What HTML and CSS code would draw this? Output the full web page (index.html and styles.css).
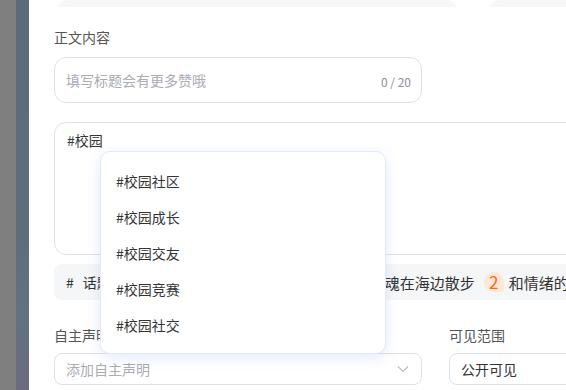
FILE: index.html
```html
<!DOCTYPE html>
<html lang="zh-CN">

<head>
    <meta charset="UTF-8">
    <meta name="viewport" content="width=device-width, initial-scale=1.0">
    <title>发布笔记</title>
    <link rel="stylesheet" href="styles.css">
</head>

<body>
    <div class="backdrop">
        <div class="strip-grey"></div>
        <div class="strip-slate"></div>
    </div>

    <main class="panel">
        <div class="top-row">
            <div class="top-box"></div>
            <div class="top-box"></div>
        </div>

        <h4 class="label">正文内容</h4>
        <div class="title-input">
            <span class="placeholder">填写标题会有更多赞哦</span>
            <span class="counter">0 / 20</span>
        </div>

        <div class="editor">
            <p class="editor-text">#校园</p>
            <ul class="suggest">
                <li>#校园社区</li>
                <li>#校园成长</li>
                <li>#校园交友</li>
                <li>#校园竞赛</li>
                <li>#校园社交</li>
            </ul>
        </div>

        <div class="topic-bar">
            <span class="topic-title"><b>#</b>话题</span>
            <span class="badge">1</span>
            <span class="topic-item">周末午后带上耳机独自一个人和灵魂在海边散步</span>
            <span class="badge badge-two">2</span>
            <span class="topic-item">和情绪的告别仪式</span>
        </div>

        <div class="form-row">
            <div class="field">
                <h4 class="label">自主声明</h4>
                <div class="select">
                    <span class="placeholder">添加自主声明</span>
                    <svg class="chevron" width="12" height="8" viewBox="0 0 12 8">
                        <path d="M1 1.5 L6 6.5 L11 1.5" fill="none" stroke="#b8bcc4" stroke-width="1.2" />
                    </svg>
                </div>
            </div>
            <div class="field">
                <h4 class="label">可见范围</h4>
                <div class="select">
                    <span class="value">公开可见</span>
                </div>
            </div>
        </div>
    </main>
</body>

</html>
```

FILE: styles.css
```css
* {
    box-sizing: border-box;
    margin: 0;
    padding: 0;
    list-style-type: none;
}

body {
    width: 566px;
    height: 390px;
    overflow: hidden;
    display: flex;
    font-family: "Noto Sans CJK SC", "Noto Sans", sans-serif;
    color: #333;
    background: #fff;
}

.backdrop {
    display: flex;
    flex: none;
}

.strip-grey {
    width: 16px;
    background: #7f7f7f;
}

.strip-slate {
    width: 13px;
    background: linear-gradient(180deg, #5d6a7a 0%, #5f6d7b 60%, #617280 80%, #6b6b80 100%);
}

.panel {
    flex: none;
    width: 820px;
    padding-left: 25px;
    background: #fff;
}

/* previous row, mostly scrolled away */
.top-row {
    height: 7px;
    overflow: hidden;
    display: grid;
    grid-template-columns: 402px 400px;
    gap: 30px;
    align-items: end;
    padding-left: 2px;
}

.top-box {
    height: 40px;
    border-radius: 12px;
    background: #f7f7f8;
}

.label {
    font-size: 14px;
    font-weight: normal;
    line-height: 20px;
    color: #555;
}

.top-row + .label {
    margin-top: 20px;
}

.title-input {
    width: 368px;
    height: 46px;
    margin-top: 10px;
    border: 1px solid #dfe1e8;
    border-radius: 12px;
    display: flex;
    align-items: center;
    justify-content: space-between;
    padding: 0 10px 0 11px;
}

.placeholder {
    font-size: 14px;
    color: #a9acb4;
}

.counter {
    font-size: 12px;
    color: #8d9099;
    padding-top: 3px;
}

.editor {
    position: relative;
    width: 763px;
    height: 133px;
    margin-top: 19px;
    border: 1px solid #dfe1e8;
    border-radius: 12px;
    padding: 7px 12px;
}

.editor-text {
    font-size: 14px;
    line-height: 20px;
}

.suggest {
    position: absolute;
    left: 45px;
    top: 28px;
    width: 286px;
    height: 203px;
    padding: 11px 0 10px;
    background: #fff;
    border: 1px solid #e2e9fb;
    border-radius: 10px;
    box-shadow: 0 4px 14px rgba(70, 110, 230, 0.14);
    z-index: 2;
}

.suggest li {
    height: 36px;
    line-height: 36px;
    padding-left: 15px;
    font-size: 14px;
    color: #333;
}

.topic-bar {
    width: 763px;
    height: 36px;
    margin-top: 9px;
    background: #f5f6f7;
    border-radius: 8px;
    display: flex;
    align-items: center;
    padding-left: 12px;
    white-space: nowrap;
    font-size: 15px;
}

.topic-title {
    font-size: 14px;
    color: #333;
}

.topic-title b {
    font-weight: normal;
    margin-right: 9px;
}

.badge {
    width: 20px;
    height: 20px;
    flex: none;
    border-radius: 10px 10px 3px 10px;
    background: #fde7d6;
    color: #ff6a10;
    font-size: 17px;
    line-height: 20px;
    text-align: center;
    margin: 0 5px 0 24px;
}

.badge-two {
    margin-left: 9px;
}

.topic-item {
    color: #333;
}

.form-row {
    display: grid;
    grid-template-columns: 368px 368px;
    gap: 27px;
    margin-top: 25px;
}

.field .label {
    margin-bottom: 8px;
}

.select {
    height: 32px;
    border: 1px solid #dfe1e8;
    border-radius: 8px;
    display: flex;
    align-items: center;
    justify-content: space-between;
    padding: 0 12px 0 11px;
}

.value {
    font-size: 14px;
    color: #333;
}

.chevron {
    display: block;
}
```
